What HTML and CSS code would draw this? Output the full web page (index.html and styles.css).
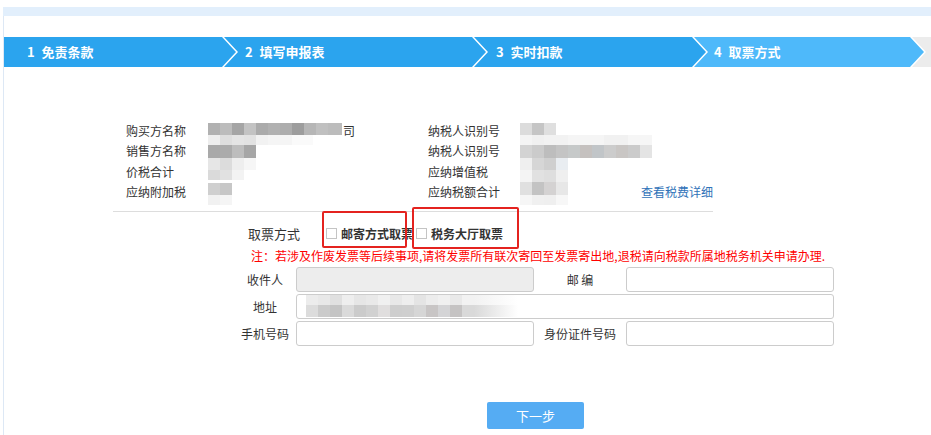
FILE: index.html
```html
<!DOCTYPE html>
<html lang="zh-CN">
<head>
  <meta charset="UTF-8">
  <meta name="viewport" content="width=device-width, initial-scale=1.0">
  <title>取票方式</title>
  <link rel="stylesheet" href="styles.css">
</head>
<body>
<div class="page">
  <div class="top-band"></div>

  <ol class="steps">
    <li class="step step-first">1 免责条款</li>
    <li class="step step-wide">2 填写申报表</li>
    <li class="step">3 实时扣款</li>
    <li class="step step-current">4 取票方式</li>
    <li class="step step-next"></li>
  </ol>

  <div class="summary">
    <span class="label">购买方名称</span>
    <span class="value"><i class="mz mz-buyer"></i><span class="tail">司</span></span>
    <span class="label">纳税人识别号</span>
    <span class="value"><i class="mz mz-tin1"></i></span>

    <span class="label">销售方名称</span>
    <span class="value"><i class="mz mz-seller"></i></span>
    <span class="label">纳税人识别号</span>
    <span class="value"><i class="mz mz-tin2"></i></span>

    <span class="label">价税合计</span>
    <span class="value"><i class="mz mz-total"></i></span>
    <span class="label">应纳增值税</span>
    <span class="value"><i class="mz mz-vat"></i></span>

    <span class="label">应纳附加税</span>
    <span class="value"><i class="mz mz-surcharge"></i></span>
    <span class="label">应纳税额合计</span>
    <span class="value"><i class="mz mz-tax"></i><a class="detail-link" href="#">查看税费详细</a></span>
  </div>

  <div class="pick">
    <span class="pick-label">取票方式</span>
    <label class="option"><input type="checkbox" class="check"><span>邮寄方式取票</span></label>
    <label class="option"><input type="checkbox" class="check"><span>税务大厅取票</span></label>
    <span class="mark mark-mail"></span>
    <span class="mark mark-hall"></span>
  </div>

  <p class="note">注：若涉及作废发票等后续事项,请将发票所有联次寄回至发票寄出地,退税请向税款所属地税务机关申请办理.</p>

  <div class="mail-form">
    <span class="form-label">收件人</span>
    <input class="field field-disabled" type="text" disabled>
    <span class="form-label">邮 编</span>
    <input class="field" type="text">

    <span class="form-label">地址</span>
    <input class="field field-address" type="text">

    <span class="form-label">手机号码</span>
    <input class="field" type="text">
    <span class="form-label">身份证件号码</span>
    <input class="field" type="text">
  </div>

  <div class="actions">
    <button class="next-btn">下一步</button>
  </div>
</div>
</body>
</html>
```

FILE: styles.css
```css
* {
  box-sizing: border-box;
}

html, body {
  margin: 0;
  padding: 0;
  background: #fff;
  overflow: hidden;
}

body {
  font-family: "Noto Sans CJK SC", "Noto Sans", sans-serif;
  font-size: 12px;
  color: #333;
}

.page {
  margin: 7px 0 0 3px;
  height: 428px;
  border-left: 1px solid #dde8f5;
}

.top-band {
  height: 9px;
  margin-left: -1px;
  background: #e2effc;
}

/* step bar */
.steps {
  list-style: none;
  display: flex;
  height: 30px;
  margin: 21px 0 0;
  padding: 0;
  overflow: hidden;
}

.step {
  flex: none;
  width: 232px;
  height: 30px;
  margin-left: -12px;
  padding-left: 22px;
  line-height: 30px;
  font-size: 13px;
  font-weight: bold;
  word-spacing: 4px;
  color: #fff;
  background: #2ba4ee;
  clip-path: polygon(0 0, calc(100% - 14px) 0, 100% 50%, calc(100% - 14px) 100%, 0 100%, 14px 50%);
}

.step-first {
  margin-left: 0;
  padding-left: 23px;
  clip-path: polygon(0 0, calc(100% - 14px) 0, 100% 50%, calc(100% - 14px) 100%, 0 100%);
}

.step-wide {
  width: 262px;
  padding-left: 21px;
}

.step-current {
  width: 230px;
  padding-left: 20px;
  background: #4eb9fa;
}

.step-next {
  width: 200px;
  background: #ececec;
}

/* invoice summary */
.summary {
  display: grid;
  grid-template-columns: 82px 220px 92px 193px;
  grid-auto-rows: 20.33px;
  width: 600px;
  margin: 54px 0 0 109px;
  padding: 0 0 9px 13px;
  line-height: 20.33px;
  border-bottom: 1px solid #ddd;
}

.value {
  display: flex;
  align-items: flex-start;
}

.tail {
  margin-left: 1px;
}

.detail-link {
  margin-left: auto;
  color: #2f72b8;
  text-decoration: none;
}

/* blurred values */
.mz {
  display: block;
  flex: none;
}

.mz-buyer {
  width: 134px;
  height: 12px;
  margin-top: 2px;
  background: linear-gradient(to right, #b1b1b1 0 12px, #bcbcbc 12px 24px, #a5a5a5 24px 36px, #c3c3c3 36px 48px, #ababab 48px 60px, #b1b1b1 60px 72px, #adadad 72px 84px, #9d9d9d 84px 96px, #b6b6b6 96px 108px, #c0c0c0 108px 120px, #bcbcbc 120px 134px);
}

.mz-seller {
  width: 105px;
  height: 23px;
  margin-top: -6px;
  background:
    linear-gradient(to right, #a9a9a9 0 12px, #ababab 12px 24px, #bdbdbd 24px 36px, #a6a6a6 36px 48px) 0 10px / 48px 13px no-repeat,
    linear-gradient(to right, #eeeeee 0 12px, #dedede 12px 24px, #e4e4e4 24px 36px, #e2e2e2 36px 48px, #f2f2f2 48px 60px, #f5f5f5 60px 84px, #fafafa 84px 105px) 0 0 / 105px 10px no-repeat;
}

.mz-total {
  width: 48px;
  height: 22px;
  margin-top: -4px;
  background:
    linear-gradient(to right, #e6e6e6 0 12px, #dcdcdc 12px 24px, #eeeeee 24px 36px, #f6f6f6 36px 48px) 0 0 / 48px 12px no-repeat,
    linear-gradient(to right, #dadada 0 12px, #e1e1e1 12px 24px, #f3f3f3 24px 36px) 0 12px / 36px 10px no-repeat;
}

.mz-surcharge {
  width: 24px;
  height: 22px;
  margin-top: 1px;
  background:
    linear-gradient(to right, #cfcfcf 0 12px, #c7c7c7 12px 24px) 0 0 / 24px 12px no-repeat,
    linear-gradient(to right, #f1f1f1 0 12px, #f5f5f5 12px 24px) 0 12px / 24px 10px no-repeat;
}

.mz-tin1 {
  width: 36px;
  height: 12px;
  margin-top: 2px;
  background: linear-gradient(to right, #dcdcdc 0 12px, #c5c5c5 12px 24px, #dfdfdf 24px 36px);
}

.mz-tin2 {
  width: 132px;
  height: 23px;
  margin-top: -6px;
  background:
    linear-gradient(to right, #f4f4f4 0 12px, #f0f0f0 12px 24px, #f2f2f2 24px 48px, #f5f5f5 48px 84px, #f1f1f1 84px 108px, #f6f6f6 108px 132px) 0 0 / 132px 10px no-repeat,
    linear-gradient(to right, #d3d3d3 0 12px, #cbcbcb 12px 24px, #bdbdbd 24px 36px, #c4c4c4 36px 48px, #c6c9c9 48px 60px, #c5c1bf 60px 72px, #c1c5c8 72px 84px, #cccccc 84px 96px, #c9c6c4 96px 108px, #cbcbcb 108px 120px, #e4e4e4 120px 132px) 0 10px / 132px 13px no-repeat;
}

.mz-vat {
  width: 48px;
  height: 24px;
  margin-top: -4px;
  background:
    linear-gradient(to right, #efefef 0 12px, #d6d6d6 12px 24px, #cfcfcf 24px 36px, #e9edf1 36px 48px) 0 0 / 48px 12px no-repeat,
    linear-gradient(to right, #f4f4f4 0 12px, #e1e1e1 12px 24px, #dedede 24px 36px, #efefef 36px 48px) 0 12px / 48px 12px no-repeat;
}

.mz-tax {
  width: 48px;
  height: 23px;
  margin-top: 0;
  background:
    linear-gradient(to right, #e0e0e0 0 12px, #c3c3c3 12px 24px, #d4d2d2 24px 36px, #e7e7e7 36px 48px) 0 0 / 48px 13px no-repeat,
    linear-gradient(to right, #f6f6f6 0 12px, #f0f0f0 12px 24px, #efefef 24px 36px, #f7f7f7 36px 48px) 0 13px / 48px 10px no-repeat;
}

/* pick-up method */
.pick {
  position: relative;
  display: flex;
  align-items: center;
  height: 24px;
  margin: 9px 0 0 244px;
}

.pick-label {
  width: 78px;
  font-size: 13px;
}

.option {
  display: flex;
  align-items: center;
  font-weight: bold;
}

.option + .option {
  margin-left: 3px;
}

.check {
  appearance: none;
  width: 11px;
  height: 11px;
  margin: 0 4px 0 0;
  border: 1px solid #c4c4c4;
  background: #fff;
}

.mark {
  position: absolute;
  border: 2px solid #e4231f;
  border-radius: 2px;
}

.mark-mail {
  left: 74px;
  top: -10px;
  width: 85px;
  height: 37px;
}

.mark-hall {
  left: 164px;
  top: -14px;
  width: 107px;
  height: 42px;
}

.note {
  margin: 1px 0 0 247px;
  line-height: 20px;
  color: #f00;
  white-space: nowrap;
}

/* mailing form */
.mail-form {
  display: grid;
  grid-template-columns: 62px 238px 92px 208px;
  grid-auto-rows: 25px;
  row-gap: 2px;
  align-items: center;
  margin: 1px 0 0 230px;
}

.form-label {
  text-align: center;
  line-height: 25px;
}

.field {
  width: 100%;
  height: 25px;
  margin: 0;
  border: 1px solid #ccc;
  border-radius: 3px;
  background: #fff;
}

.field-disabled {
  background: #ededed;
}

.field-address {
  grid-column: 2 / 5;
  background:
    linear-gradient(to right, #ececec 0 12px, #e8e8e8 12px 24px, #e0e0e0 24px 36px, #eeeeee 36px 48px, #e6e6e6 48px 60px, #e9e9e9 60px 72px, #f0f0f0 72px 84px, #e8e8e8 84px 96px, #eeeeee 96px 108px, #e4e4e4 108px 120px, #ececec 120px 132px, #f0f0f0 132px 144px, #e9e9e9 144px 156px, #f2f2f2 156px 168px, #fff 212px) 9px 0 / 212px 10px no-repeat,
    linear-gradient(to right, #dcdcdc 0 12px, #cbcbcb 12px 24px, #c4c4c4 24px 36px, #dadada 36px 48px, #cbcbcb 48px 60px, #d1d1d1 60px 72px, #e0dede 72px 84px, #cecece 84px 96px, #cfcfcf 96px 108px, #d6d6d6 108px 120px, #c8c5c5 120px 132px, #d4d4d6 132px 144px, #c5c3c3 144px 156px, #d9d9d9 156px 168px, #fff 212px) 9px 10px / 212px 12px no-repeat,
    #fff;
}

.actions {
  margin: 56px 0 0 483px;
}

.next-btn {
  width: 97px;
  height: 27px;
  border: none;
  border-radius: 2px;
  background: #55acf3;
  color: #fff;
  font-family: inherit;
  font-size: 13px;
  cursor: pointer;
}
```
